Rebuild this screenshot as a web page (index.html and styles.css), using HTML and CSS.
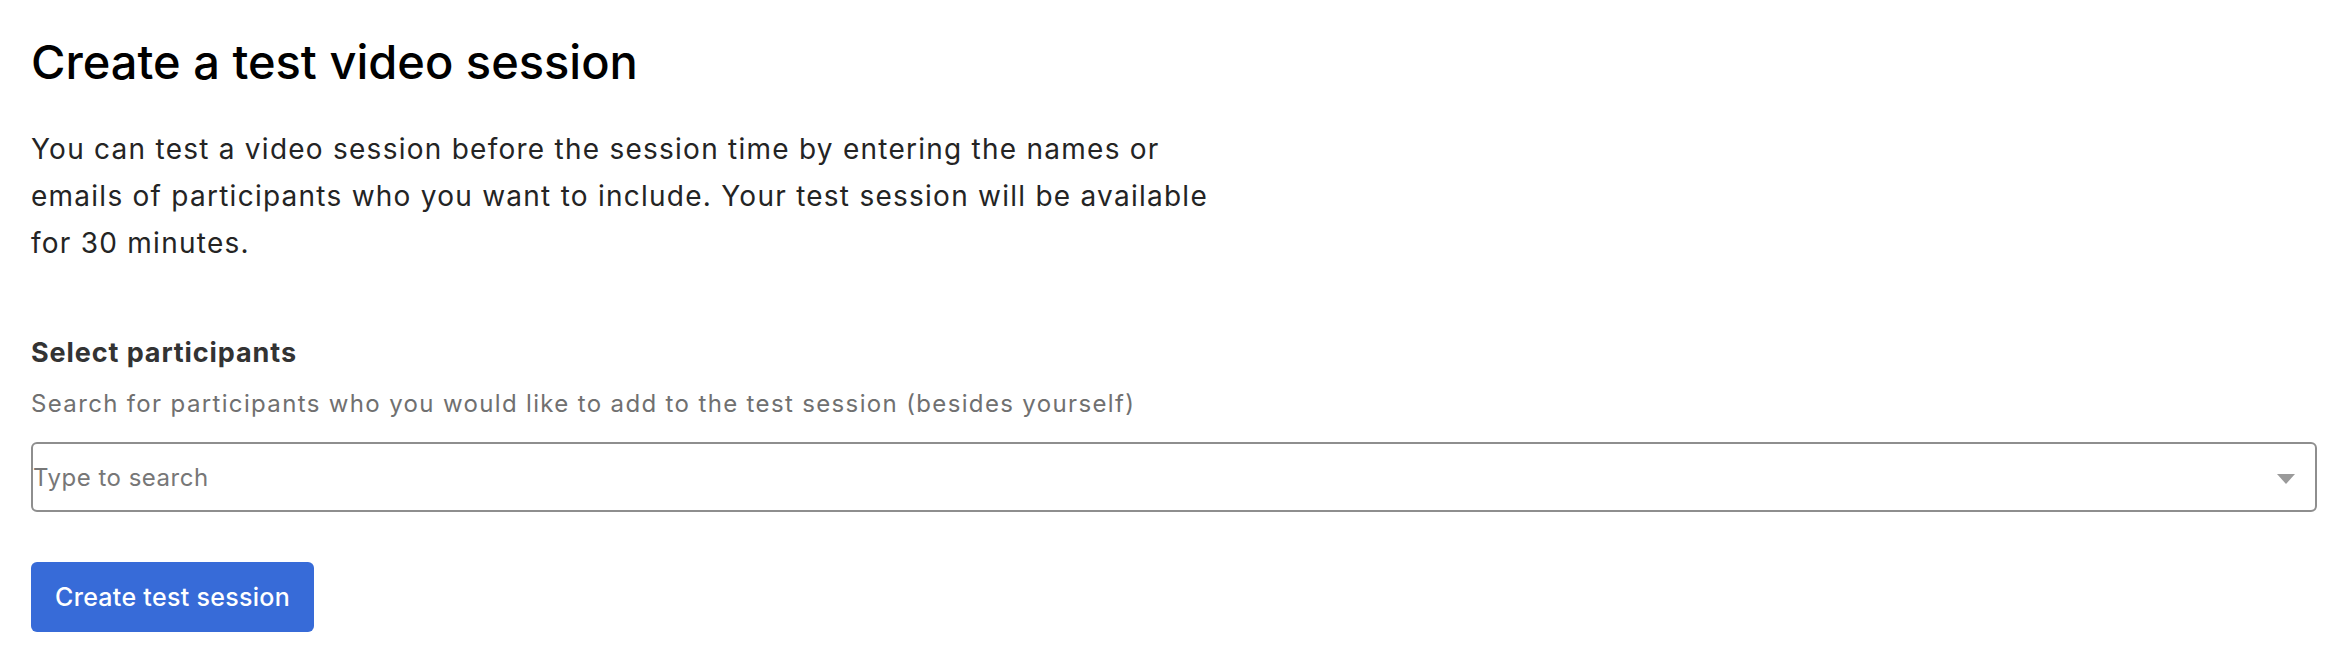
FILE: index.html
```html
<!DOCTYPE html>
<html lang="en">
<head>
<meta charset="utf-8">
<title>Create a test video session</title>
<link rel="stylesheet" href="styles.css">
</head>
<body>
<main class="page">
  <h1 class="title">Create a test video session</h1>
  <p class="intro">You can test a video session before the session time by entering the names or emails of participants who you want to include. Your test session will be available for 30 minutes.</p>
  <section class="field">
    <label class="field-label" for="participants">Select participants</label>
    <p class="field-hint">Search for participants who you would like to add to the test session (besides yourself)</p>
    <div class="select">
      <input id="participants" class="select-input" type="text" placeholder="Type to search">
      <span class="select-caret" aria-hidden="true">
        <svg width="20" height="12" viewBox="0 0 20 12"><path d="M1 1 L19 1 L10 11 Z" fill="#9a9a9a"/></svg>
      </span>
    </div>
  </section>
  <button class="btn-primary" type="button">Create test session</button>
</main>
</body>
</html>
```

FILE: styles.css
```css
* { box-sizing: border-box; }

html, body {
  margin: 0;
  padding: 0;
  background: #ffffff;
}

body {
  font-family: Inter, "Noto Sans", "Liberation Sans", sans-serif;
  color: #1f1f1f;
}

.page {
  display: flex;
  flex-direction: column;
  align-items: flex-start;
  padding: 34px 27px 0 31px;
}

.title {
  margin: 0;
  font-size: 47px;
  line-height: 55px;
  font-weight: 500;
  color: #000000;
  letter-spacing: 0;
}

.intro {
  margin: 37px 0 0 0;
  max-width: 1200px;
  font-size: 28px;
  line-height: 47px;
  font-weight: 400;
  color: #242424;
  letter-spacing: 1.25px;
}

.field {
  display: flex;
  flex-direction: column;
  align-self: stretch;
  margin-top: 68px;
}

.field-label {
  font-size: 27px;
  line-height: 36px;
  font-weight: 700;
  color: #333333;
  letter-spacing: 0.9px;
}

.field-hint {
  margin: 16px 0 0 0;
  font-size: 24px;
  line-height: 34px;
  color: #707070;
  letter-spacing: 1.35px;
}

.select {
  margin-top: 21px;
  height: 70px;
  display: flex;
  align-items: center;
  border: 2px solid #8e8e8e;
  border-radius: 6px;
  background: #fff;
}

.select-input {
  flex: 1;
  min-width: 0;
  height: 100%;
  border: 0;
  outline: none;
  padding: 0;
  background: transparent;
  font-family: inherit;
  font-size: 24px;
  letter-spacing: 0.5px;
  color: #333;
}

.select-input::placeholder {
  color: #777777;
  opacity: 1;
}

.select-caret {
  display: flex;
  align-items: center;
  padding: 4px 19px 0 18px;
}

.btn-primary {
  margin-top: 50px;
  height: 70px;
  padding: 0 24px;
  border: 0;
  border-radius: 6px;
  background: #376bd8;
  color: #ffffff;
  font-family: inherit;
  font-size: 25px;
  font-weight: 500;
  letter-spacing: 0.3px;
  cursor: pointer;
}
```
